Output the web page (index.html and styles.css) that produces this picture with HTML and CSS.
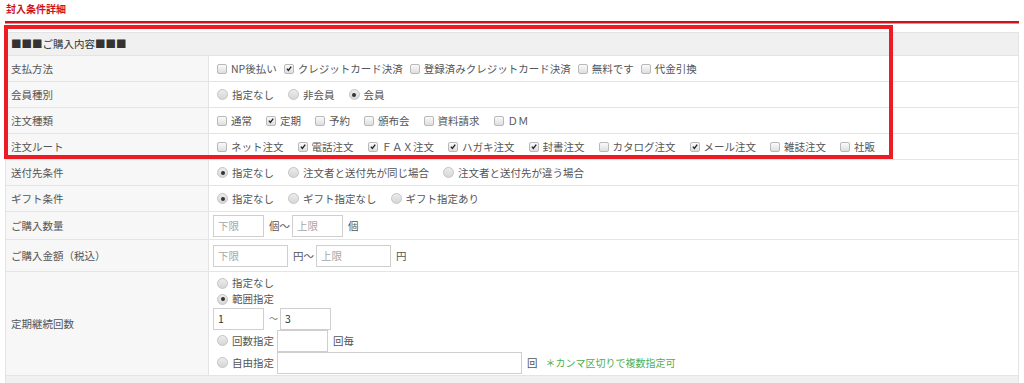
FILE: index.html
```html
<!DOCTYPE html>
<html lang="ja">
<head>
<meta charset="utf-8">
<title>封入条件詳細</title>
<link rel="stylesheet" href="styles.css">
</head>
<body>
<div class="page">
  <h2 class="title">封入条件詳細</h2>
  <table class="cond">
    <colgroup><col class="c-label"><col class="c-value"></colgroup>
    <tr class="head"><th colspan="2">■■■ご購入内容■■■</th></tr>
    <tr>
      <th>支払方法</th>
      <td><div class="opts tight">
        <label class="opt"><span class="cb"></span>NP後払い</label>
        <label class="opt"><span class="cb on"><svg viewBox="0 0 10 10"><path d="M2.3 5.2 L4.2 7.3 L7.8 2.6"/></svg></span>クレジットカード決済</label>
        <label class="opt"><span class="cb"></span>登録済みクレジットカード決済</label>
        <label class="opt"><span class="cb"></span>無料です</label>
        <label class="opt"><span class="cb"></span>代金引換</label>
      </div></td>
    </tr>
    <tr>
      <th>会員種別</th>
      <td><div class="opts">
        <label class="opt"><span class="rd"></span>指定なし</label>
        <label class="opt"><span class="rd"></span>非会員</label>
        <label class="opt"><span class="rd on"></span>会員</label>
      </div></td>
    </tr>
    <tr>
      <th>注文種類</th>
      <td><div class="opts">
        <label class="opt"><span class="cb"></span>通常</label>
        <label class="opt"><span class="cb on"><svg viewBox="0 0 10 10"><path d="M2.3 5.2 L4.2 7.3 L7.8 2.6"/></svg></span>定期</label>
        <label class="opt"><span class="cb"></span>予約</label>
        <label class="opt"><span class="cb"></span>頒布会</label>
        <label class="opt"><span class="cb"></span>資料請求</label>
        <label class="opt"><span class="cb"></span>ＤＭ</label>
      </div></td>
    </tr>
    <tr>
      <th>注文ルート</th>
      <td><div class="opts">
        <label class="opt"><span class="cb"></span>ネット注文</label>
        <label class="opt"><span class="cb on"><svg viewBox="0 0 10 10"><path d="M2.3 5.2 L4.2 7.3 L7.8 2.6"/></svg></span>電話注文</label>
        <label class="opt"><span class="cb on"><svg viewBox="0 0 10 10"><path d="M2.3 5.2 L4.2 7.3 L7.8 2.6"/></svg></span>ＦＡＸ注文</label>
        <label class="opt"><span class="cb on"><svg viewBox="0 0 10 10"><path d="M2.3 5.2 L4.2 7.3 L7.8 2.6"/></svg></span>ハガキ注文</label>
        <label class="opt"><span class="cb on"><svg viewBox="0 0 10 10"><path d="M2.3 5.2 L4.2 7.3 L7.8 2.6"/></svg></span>封書注文</label>
        <label class="opt"><span class="cb"></span>カタログ注文</label>
        <label class="opt"><span class="cb on"><svg viewBox="0 0 10 10"><path d="M2.3 5.2 L4.2 7.3 L7.8 2.6"/></svg></span>メール注文</label>
        <label class="opt"><span class="cb"></span>雑誌注文</label>
        <label class="opt"><span class="cb"></span>社販</label>
      </div></td>
    </tr>
    <tr>
      <th>送付先条件</th>
      <td><div class="opts">
        <label class="opt"><span class="rd on"></span>指定なし</label>
        <label class="opt"><span class="rd"></span>注文者と送付先が同じ場合</label>
        <label class="opt"><span class="rd"></span>注文者と送付先が違う場合</label>
      </div></td>
    </tr>
    <tr>
      <th>ギフト条件</th>
      <td><div class="opts">
        <label class="opt"><span class="rd on"></span>指定なし</label>
        <label class="opt"><span class="rd"></span>ギフト指定なし</label>
        <label class="opt"><span class="rd"></span>ギフト指定あり</label>
      </div></td>
    </tr>
    <tr class="r-qty">
      <th>ご購入数量</th>
      <td class="inp"><div class="line">
        <input class="box w50" placeholder="下限"><span class="unit">個～</span><input class="box w50" placeholder="上限"><span class="unit end">個</span>
      </div></td>
    </tr>
    <tr class="r-amt">
      <th>ご購入金額（税込）</th>
      <td class="inp"><div class="line">
        <input class="box w74" placeholder="下限"><span class="unit">円～</span><input class="box w74" placeholder="上限"><span class="unit end">円</span>
      </div></td>
    </tr>
    <tr class="r-times">
      <th>定期継続回数</th>
      <td class="inp">
        <div class="rline"><label class="opt"><span class="rd"></span>指定なし</label></div>
        <div class="rline"><label class="opt"><span class="rd on"></span>範囲指定</label></div>
        <div class="line"><input class="box w50" value="1"><span class="tilde">～</span><input class="box w50" value="3"></div>
        <div class="line"><label class="opt"><span class="rd"></span>回数指定</label><input class="box w50 after"><span class="unit end">回毎</span></div>
        <div class="line"><label class="opt"><span class="rd"></span>自由指定</label><input class="box w244 after"><span class="unit end">回</span><span class="note">＊カンマ区切りで複数指定可</span></div>
      </td>
    </tr>
    <tr class="head"><th colspan="2"></th></tr>
  </table>
  <div class="mark"></div>
</div>
</body>
</html>
```

FILE: styles.css
```css
html, body {
  margin: 0;
  padding: 0;
  background: #fff;
}
body {
  font-family: "Noto Sans CJK JP", "Noto Sans", sans-serif;
  font-size: 10.5px;
  color: #555;
}
.page {
  position: relative;
  padding: 0 5px;
  height: 383px;
  overflow: hidden;
}
.title {
  margin: 0;
  padding: 2px 0 0 1px;
  height: 19px;
  line-height: 14px;
  font-size: 10px;
  font-weight: bold;
  color: #d0131b;
  border-bottom: 2px solid #c8151d;
  box-shadow: 0 1px 0 #e88a8a;
}
.cond {
  margin-top: 9px;
  width: 1014px;
  border-collapse: collapse;
  table-layout: fixed;
}
.c-label { width: 203px; }
.cond th, .cond td {
  border: 1px solid #e4e4e4;
  height: 25px;
  padding: 0;
  vertical-align: middle;
  line-height: 14px;
}
.cond th {
  padding-left: 5px;
  text-align: left;
  font-weight: normal;
  background: #f6f7f6;
  color: #555;
}
.cond td {
  padding-left: 4px;
  background: #fff;
}
.cond tr.head th {
  background: #eff0ef;
  color: #333;
  height: 22px;
}
.opts {
  display: flex;
  align-items: center;
  gap: 14px;
  padding-left: 4px;
  white-space: nowrap;
}
.opts.tight {
  gap: 7px;
}
.opt {
  display: inline-flex;
  align-items: center;
  gap: 4px;
  white-space: nowrap;
}
.cb {
  display: inline-flex;
  align-items: center;
  justify-content: center;
  width: 10px;
  height: 10px;
  box-sizing: border-box;
  border: 1px solid #b9b9b9;
  border-radius: 2px;
  background: linear-gradient(#fafafa, #dedede);
}
.cb svg {
  width: 9px;
  height: 9px;
  fill: none;
  stroke: #222;
  stroke-width: 1.7;
}
.rd {
  display: inline-flex;
  align-items: center;
  justify-content: center;
  width: 11px;
  height: 11px;
  box-sizing: border-box;
  border: 1px solid #c6c6c6;
  border-radius: 50%;
  background: linear-gradient(#ececec, #d6d6d6);
}
.rd.on::after {
  content: "";
  width: 4px;
  height: 4px;
  border-radius: 50%;
  background: #333;
}
.line {
  display: flex;
  align-items: center;
  height: 21px;
  white-space: nowrap;
}
.rline {
  display: flex;
  align-items: center;
  height: 16px;
  padding-left: 4px;
}
.line .opt {
  padding-left: 4px;
}
.box {
  box-sizing: border-box;
  height: 22px;
  border: 1px solid #cfcfcf;
  padding: 0 4px;
  font-family: "Noto Sans CJK JP", "Noto Sans", sans-serif;
  font-size: 10.5px;
  color: #333;
  background: #fff;
  outline: none;
}
.box::placeholder {
  color: #a8a8a8;
}
.w50 { width: 51px; }
.w74 { width: 75px; }
.w244 { width: 245px; }
.box.after { margin-left: 3px; }
.unit {
  margin: 0 2px 0 5px;
  color: #555;
}
.unit.end { margin-left: 5px; }
.tilde {
  margin: 0 2px 0 5px;
  font-size: 9px;
  color: #777;
}
.r-qty td, .r-qty th { height: 27px; }
.r-amt td, .r-amt th { height: 31px; }
.r-times td { height: 103px; padding-top: 0; }
.r-times td .rline:first-child { margin-top: 1px; }
.r-times .line { height: 21px; margin-top: 1px; }
.note {
  margin-left: 6px;
  color: #4caf50;
  font-size: 10px;
}
.mark {
  position: absolute;
  left: 4px;
  top: 25px;
  width: 889px;
  height: 134px;
  box-sizing: border-box;
  border: 4px solid #ec1c24;
  pointer-events: none;
}
```
